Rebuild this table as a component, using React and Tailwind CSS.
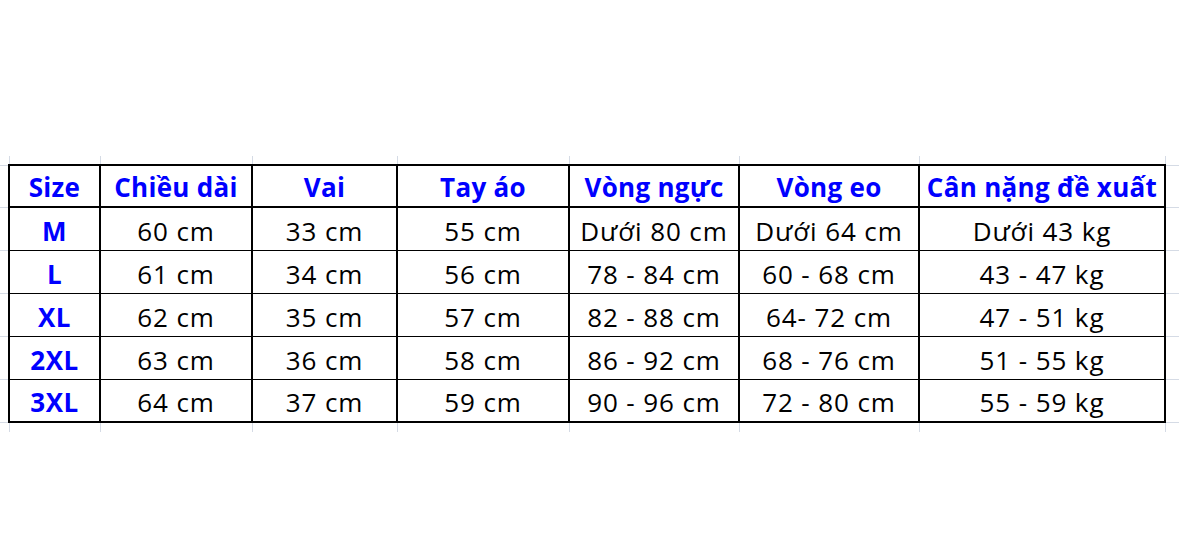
import React from "react";

const headers = ["Size", "Chiều dài", "Vai", "Tay áo", "Vòng ngực", "Vòng eo", "Cân nặng đề xuất"];
const rows = [
  ["M", "60 cm", "33 cm", "55 cm", "Dưới 80 cm", "Dưới 64 cm", "Dưới 43 kg"],
  ["L", "61 cm", "34 cm", "56 cm", "78 - 84 cm", "60 - 68 cm", "43 - 47 kg"],
  ["XL", "62 cm", "35 cm", "57 cm", "82 - 88 cm", "64- 72 cm", "47 - 51 kg"],
  ["2XL", "63 cm", "36 cm", "58 cm", "86 - 92 cm", "68 - 76 cm", "51 - 55 kg"],
  ["3XL", "64 cm", "37 cm", "59 cm", "90 - 96 cm", "72 - 80 cm", "55 - 59 kg"],
];

const font = { fontFamily: '"Open Sans", "Noto Sans", sans-serif' };

export default function App() {
  return (
    <div className="w-[1179px] h-[554px] bg-white pt-[156px] overflow-hidden" style={font}>
      <table className="border-collapse table-fixed w-[1179px]">
        <colgroup>
          <col className="w-[9px]" />
          <col className="w-[91px]" />
          <col className="w-[152px]" />
          <col className="w-[145px]" />
          <col className="w-[172px]" />
          <col className="w-[170px]" />
          <col className="w-[180px]" />
          <col className="w-[246px]" />
          <col className="w-[14px]" />
        </colgroup>
        <tbody>
          <tr className="h-[9px]">
            {Array.from({ length: 9 }).map((_, i) => (
              <td key={i} className={`p-0 ${i < 8 ? "border-r border-r-[#d5dbe5]" : ""}`} />
            ))}
          </tr>
          <tr className="h-[42px]">
            <td className="p-0 border-t border-b border-[#d5dbe5]" />
            {headers.map((h) => (
              <td
                key={h}
                className="p-0 pb-[6px] border-2 border-black align-bottom text-center whitespace-nowrap text-[26px] leading-none font-bold text-[#0000ff] tracking-[0.3px]"
              >
                {h}
              </td>
            ))}
            <td className="p-0 border-t border-b border-[#d5dbe5]" />
          </tr>
          {rows.map((r, ri) => (
            <tr key={ri} className="h-[43px]">
              <td className="p-0 border-b border-[#d5dbe5]" />
              {r.map((c, ci) => (
                <td
                  key={ci}
                  className={`p-0 pb-[6px] border-x-2 border-y border-black align-bottom text-center whitespace-nowrap text-[26px] leading-none ${
                    ci === 0 ? "font-bold text-[#0000ff] tracking-[0.5px]" : "text-black tracking-[0.9px]"
                  } ${ri === rows.length - 1 ? "border-b-2" : ""}`}
                >
                  {c}
                </td>
              ))}
              <td className="p-0 border-b border-[#d5dbe5]" />
            </tr>
          ))}
          <tr className="h-[10px]">
            {Array.from({ length: 9 }).map((_, i) => (
              <td key={i} className={`p-0 ${i < 8 ? "border-r border-r-[#d5dbe5]" : ""}`} />
            ))}
          </tr>
        </tbody>
      </table>
    </div>
  );
}
